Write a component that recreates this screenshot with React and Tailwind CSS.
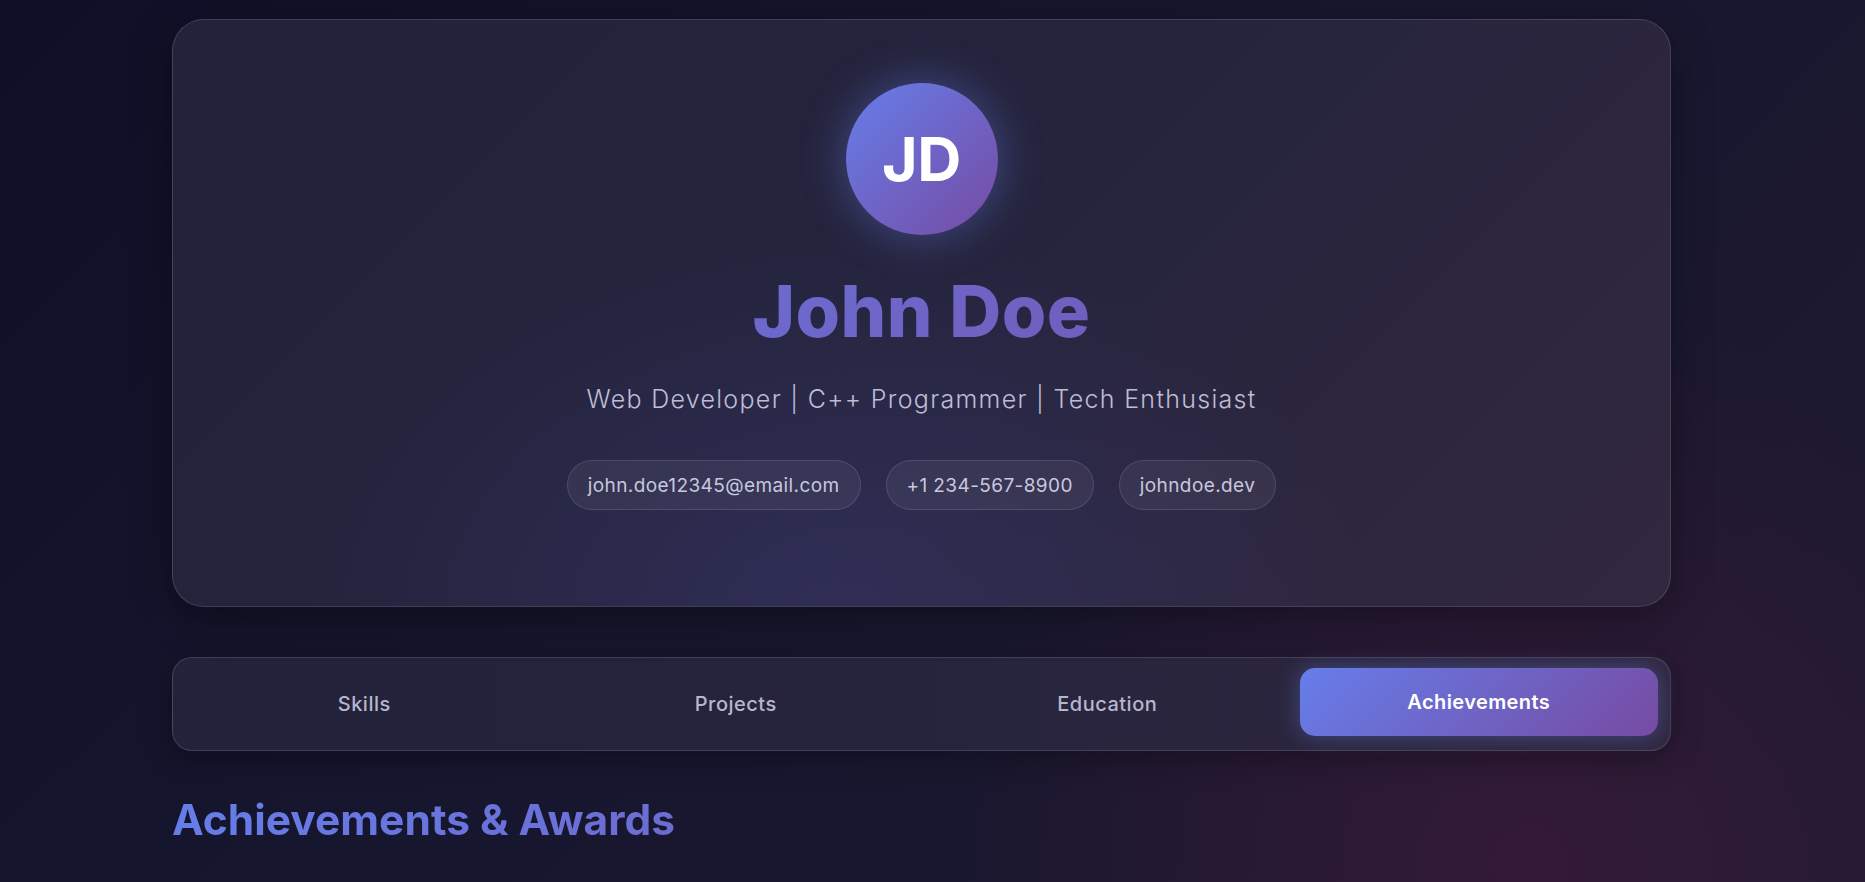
export default function App() {
  const tabs = ["Skills", "Projects", "Education", "Achievements"];
  const active = "Achievements";
  return (
    <div className="relative h-[882px] overflow-hidden bg-[linear-gradient(135deg,#0f0f27_0%,#16162e_45%,#1f1a31_100%)] font-['Inter',sans-serif]">
      <div className="pointer-events-none absolute inset-0 bg-[radial-gradient(circle_at_82%_98%,rgba(75,28,62,0.5)_0%,transparent_32%)]" />
      <div className="relative ml-[172px] w-[1499px] pt-[19px]">
        <section className="relative overflow-hidden rounded-[32px] border border-white/[0.13] bg-[linear-gradient(135deg,#22223a_0%,#25243d_50%,#32283f_100%)] shadow-[0_10px_40px_rgba(0,0,0,0.35)]">
          <div className="pointer-events-none absolute inset-0 bg-[radial-gradient(ellipse_at_44%_100%,rgba(70,70,150,0.28)_0%,transparent_45%)]" />
          <div className="relative flex flex-col items-center pt-[63px] pb-[96px]">
            <div className="flex h-[152px] w-[152px] items-center justify-center rounded-full bg-[linear-gradient(135deg,#667eea,#764ba2)] shadow-[0_0_45px_rgba(102,126,234,0.45)]">
              <span className="text-[61px] font-bold leading-none tracking-[-0.3px] text-white">JD</span>
            </div>
            <h1 className="mt-[40px] w-full bg-[linear-gradient(135deg,#667eea,#764ba2)] bg-clip-text text-center text-[72px] font-extrabold leading-none tracking-[0.5px] text-transparent">
              John Doe
            </h1>
            <p className="mt-[40px] text-[25px] font-light leading-none tracking-[1.3px] text-[#bdbdd6]">
              Web Developer | C++ Programmer | Tech Enthusiast
            </p>
            <div className="mt-[48px] flex gap-[25px]">
              {["john.doe12345@email.com", "+1 234-567-8900", "johndoe.dev"].map((c) => (
                <span
                  key={c}
                  className="flex h-[50px] items-center rounded-full border border-white/[0.12] bg-white/[0.06] px-5 text-[19px] leading-none tracking-[0.4px] text-[#c8c8de]"
                >
                  {c}
                </span>
              ))}
            </div>
          </div>
        </section>

        <nav className="mt-[50px] grid grid-cols-4 gap-[13px] rounded-[20px] border border-white/[0.13] bg-[linear-gradient(90deg,#22223a_0%,#26243d_50%,#30283f_100%)] p-3 shadow-[0_8px_30px_rgba(0,0,0,0.3)]">
          {tabs.map((t) =>
            t === active ? (
              <div
                key={t}
                className="flex h-[68px] -translate-y-[2px] items-center justify-center rounded-[15px] bg-[linear-gradient(135deg,#667eea,#764ba2)] text-[20px] font-semibold tracking-[0.4px] text-white shadow-[0_0_22px_rgba(102,126,234,0.4)]"
              >
                {t}
              </div>
            ) : (
              <div
                key={t}
                className="flex h-[68px] items-center justify-center rounded-[15px] text-[20px] font-medium tracking-[0.5px] text-[#b6b6ce]"
              >
                {t}
              </div>
            )
          )}
        </nav>

        <h2 className="mt-[48px] bg-[linear-gradient(135deg,#667eea,#764ba2)] bg-clip-text text-[42.5px] font-bold leading-none text-transparent">
          Achievements &amp; Awards
        </h2>
      </div>
    </div>
  );
}
